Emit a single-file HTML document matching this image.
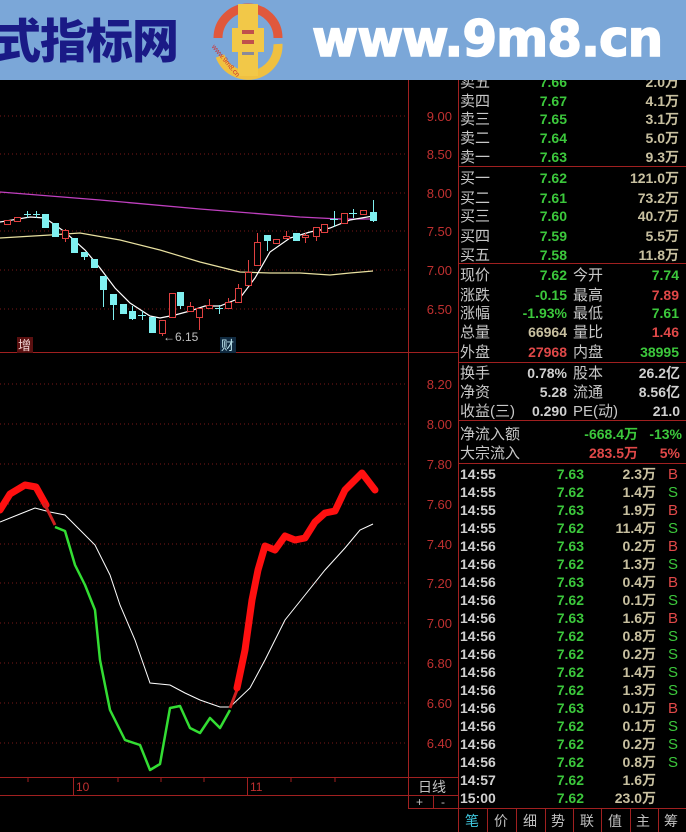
<!DOCTYPE html>
<html><head><meta charset="utf-8"><style>
html,body{margin:0;padding:0;background:#000;width:686px;height:832px;overflow:hidden}
#banner{position:absolute;left:0;top:0;width:686px;height:80px;background:#7ba7d8}
svg text{font-family:"Liberation Sans","Noto Sans CJK SC",sans-serif}
</style></head><body>
<div id="banner">
<div style="position:absolute;left:-6px;top:10px;font:900 47px 'Noto Sans CJK SC','WenQuanYi Zen Hei',sans-serif;color:#1a1a86;letter-spacing:-1px;line-height:56px">式指标网</div>
<svg style="position:absolute;left:200px;top:0" width="95" height="82">
<path d="M18 38 A30 30 0 0 1 78 38" fill="none" stroke="#e0583c" stroke-width="9"/>
<path d="M78 44 A30 30 0 0 1 20 56" fill="none" stroke="#f0c040" stroke-width="9"/>
<rect x="38" y="4" width="20" height="72" fill="#f2c848"/>
<rect x="32" y="28" width="32" height="24" fill="#f2c848"/>
<rect x="42" y="30" width="12" height="4" fill="#c0504c"/><rect x="42" y="40" width="12" height="4" fill="#c0504c"/><rect x="42" y="52" width="12" height="3" fill="#8a8a9a"/>
<text x="10" y="50" font-size="7" fill="#c33" transform="rotate(50 14 50)">www.9m8.cn</text>
</svg>
<div style="position:absolute;left:312px;top:6px;font:bold 50px 'DejaVu Sans','Liberation Sans',sans-serif;color:#fff;letter-spacing:-1px;line-height:66px;-webkit-text-stroke:1.5px #fff">www.9m8.cn</div>
</div>
<svg style="position:absolute;left:0;top:80px" width="686" height="752" viewBox="0 80 686 752">
<g stroke="#7a1818" stroke-dasharray="1 3" stroke-width="1">
<line x1="0" y1="116" x2="408" y2="116"/><line x1="0" y1="154" x2="408" y2="154"/><line x1="0" y1="193" x2="408" y2="193"/><line x1="0" y1="231" x2="408" y2="231"/><line x1="0" y1="270" x2="408" y2="270"/><line x1="0" y1="309" x2="408" y2="309"/>
<line x1="0" y1="384" x2="408" y2="384"/><line x1="0" y1="424" x2="408" y2="424"/><line x1="0" y1="464" x2="408" y2="464"/><line x1="0" y1="504" x2="408" y2="504"/><line x1="0" y1="544" x2="408" y2="544"/><line x1="0" y1="583" x2="408" y2="583"/><line x1="0" y1="623" x2="408" y2="623"/><line x1="0" y1="663" x2="408" y2="663"/><line x1="0" y1="703" x2="408" y2="703"/><line x1="0" y1="743" x2="408" y2="743"/>
</g>
<g stroke="#a02020" stroke-width="1" fill="none">
<line x1="408.5" y1="80" x2="408.5" y2="808"/><line x1="458.5" y1="80" x2="458.5" y2="832"/>
<line x1="0" y1="352.5" x2="458" y2="352.5"/><line x1="0" y1="777.5" x2="458" y2="777.5"/><line x1="0" y1="795.5" x2="458" y2="795.5"/>
<line x1="408" y1="808.5" x2="686" y2="808.5"/><line x1="433.5" y1="795" x2="433.5" y2="808"/>
<line x1="458" y1="166.5" x2="686" y2="166.5"/><line x1="458" y1="263.5" x2="686" y2="263.5"/><line x1="458" y1="362.5" x2="686" y2="362.5"/><line x1="458" y1="420.5" x2="686" y2="420.5"/><line x1="458" y1="463.5" x2="686" y2="463.5"/>
<line x1="73.5" y1="778" x2="73.5" y2="795"/><line x1="247.5" y1="778" x2="247.5" y2="795"/>
<line x1="28" y1="778" x2="28" y2="782"/><line x1="118" y1="778" x2="118" y2="782"/><line x1="161" y1="778" x2="161" y2="782"/><line x1="204" y1="778" x2="204" y2="782"/><line x1="291" y1="778" x2="291" y2="782"/><line x1="335" y1="778" x2="335" y2="782"/>
<line x1="487.5" y1="808" x2="487.5" y2="832"/><line x1="516.5" y1="808" x2="516.5" y2="832"/><line x1="545.5" y1="808" x2="545.5" y2="832"/><line x1="573.5" y1="808" x2="573.5" y2="832"/><line x1="601.5" y1="808" x2="601.5" y2="832"/><line x1="630.5" y1="808" x2="630.5" y2="832"/><line x1="658.5" y1="808" x2="658.5" y2="832"/>
</g>
<g fill="#c03030" font-size="13" text-anchor="end">
<text x="452" y="121">9.00</text><text x="452" y="159">8.50</text><text x="452" y="198">8.00</text><text x="452" y="236">7.50</text><text x="452" y="275">7.00</text><text x="452" y="314">6.50</text>
<text x="452" y="389">8.20</text><text x="452" y="429">8.00</text><text x="452" y="469">7.80</text><text x="452" y="509">7.60</text><text x="452" y="549">7.40</text><text x="452" y="588">7.20</text><text x="452" y="628">7.00</text><text x="452" y="668">6.80</text><text x="452" y="708">6.60</text><text x="452" y="748">6.40</text>
</g>
<polyline fill="none" stroke="#c040c0" stroke-width="1.3" points="0,192 100,200 200,209 300,217 340,219 373,219"/>
<polyline fill="none" stroke="#e8e0a0" stroke-width="1.2" points="0,238 50,235 80,233 120,240 160,250 200,262 240,272 270,273 300,273 330,275 350,273 373,271"/>
<polyline fill="none" stroke="#fff" stroke-width="1.2" points="0,222 30,217 45,218 65,232 85,250 100,268 115,288 130,303 150,316 160,318 175,315 190,311 205,306 220,306 240,298 255,278 270,252 290,238 310,232 330,228 350,220 373,216"/>
<g stroke-width="1">
<g stroke="#e04040" fill="#000">
<rect x="4.5" y="220.5" width="6" height="4"/><rect x="14.5" y="217.5" width="6" height="4"/>
<line x1="65.5" y1="229" x2="65.5" y2="242"/><rect x="62.5" y="230.5" width="6" height="8"/>
<rect x="159.5" y="320.5" width="6" height="13"/><line x1="162.5" y1="333" x2="162.5" y2="336"/>
<rect x="169.5" y="293.5" width="6" height="24"/>
<line x1="190.5" y1="302" x2="190.5" y2="311"/><rect x="187.5" y="306.5" width="6" height="5"/>
<line x1="199.5" y1="308" x2="199.5" y2="330"/><rect x="196.5" y="308.5" width="6" height="9"/>
<line x1="209.5" y1="299" x2="209.5" y2="308"/><rect x="206.5" y="305.5" width="6" height="3"/>
<line x1="228.5" y1="298" x2="228.5" y2="308"/><rect x="225.5" y="302.5" width="6" height="6"/>
<line x1="238.5" y1="284" x2="238.5" y2="302"/><rect x="235.5" y="288.5" width="6" height="14"/>
<line x1="248.5" y1="260" x2="248.5" y2="285"/><rect x="245.5" y="272.5" width="6" height="13"/>
<line x1="257.5" y1="233" x2="257.5" y2="265"/><rect x="254.5" y="242.5" width="6" height="23"/>
<rect x="273.5" y="239.5" width="6" height="4"/>
<line x1="286.5" y1="231" x2="286.5" y2="238"/><rect x="283.5" y="236.5" width="6" height="2"/>
<line x1="305.5" y1="233" x2="305.5" y2="243"/><rect x="302.5" y="235.5" width="6" height="2"/>
<line x1="316.5" y1="227" x2="316.5" y2="241"/><rect x="313.5" y="227.5" width="6" height="9"/>
<rect x="321.5" y="224.5" width="6" height="8"/>
<rect x="341.5" y="213.5" width="6" height="10"/>
<rect x="360.5" y="210.5" width="6" height="4"/>
</g>
<g stroke="#7ff0f0" fill="#7ff0f0">
<line x1="24" y1="214.5" x2="31" y2="214.5"/><line x1="27.5" y1="211" x2="27.5" y2="218"/>
<line x1="33" y1="214.5" x2="40" y2="214.5"/><line x1="36.5" y1="211" x2="36.5" y2="218"/>
<rect x="42.5" y="214.5" width="6" height="13"/>
<rect x="52.5" y="223.5" width="6" height="13"/>
<rect x="71.5" y="238.5" width="6" height="14"/>
<line x1="84.5" y1="252" x2="84.5" y2="260"/><rect x="81.5" y="252.5" width="6" height="4"/>
<rect x="91.5" y="259.5" width="6" height="8"/>
<line x1="103.5" y1="276" x2="103.5" y2="307"/><rect x="100.5" y="276.5" width="6" height="13"/>
<line x1="113.5" y1="294" x2="113.5" y2="320"/><rect x="110.5" y="294.5" width="6" height="10"/>
<rect x="120.5" y="304.5" width="6" height="9"/>
<line x1="132.5" y1="306" x2="132.5" y2="320"/><rect x="129.5" y="311.5" width="6" height="7"/>
<line x1="138" y1="315.5" x2="146" y2="315.5"/><line x1="142.5" y1="311" x2="142.5" y2="320"/>
<rect x="149.5" y="317.5" width="6" height="15"/>
<line x1="180.5" y1="292" x2="180.5" y2="309"/><rect x="177.5" y="292.5" width="6" height="13"/>
<line x1="215" y1="308.5" x2="223" y2="308.5"/><line x1="219.5" y1="305" x2="219.5" y2="314"/>
<line x1="267.5" y1="235" x2="267.5" y2="251"/><rect x="264.5" y="235.5" width="6" height="5"/>
<rect x="293.5" y="233.5" width="6" height="7"/>
<line x1="330" y1="219.5" x2="338" y2="219.5"/><line x1="334.5" y1="211" x2="334.5" y2="227"/>
<line x1="349" y1="213.5" x2="357" y2="213.5"/><line x1="353.5" y1="209" x2="353.5" y2="218"/>
<line x1="373.5" y1="200" x2="373.5" y2="222"/><rect x="370.5" y="212.5" width="6" height="8"/>
</g>
</g>
<text x="163" y="341" fill="#c0c0c0" font-size="12">←6.15</text>
<rect x="17" y="337" width="16" height="16" fill="#5a1010"/><text x="18" y="350" fill="#f0d0d0" font-size="13">增</text>
<rect x="220" y="337" width="16" height="16" fill="#102a40"/><text x="221" y="350" fill="#c0e8f0" font-size="13">财</text>
<polyline fill="none" stroke="#fff" stroke-width="1" points="0,522 20,514 35,508 50,512 65,515 95,545 110,575 120,605 135,640 150,683 170,685 185,693 200,700 220,707 230,707 250,688 265,660 285,620 305,595 325,570 345,548 360,530 373,524"/>
<polyline fill="none" stroke="#33dd33" stroke-width="2.5" stroke-linejoin="round" points="55,527 65,531 75,565 85,585 95,610 100,660 110,710 125,740 140,745 150,770 160,764 170,708 180,706 190,728 200,733 210,718 220,728 230,710"/>
<polyline fill="none" stroke="#ff1010" stroke-width="7" stroke-linejoin="round" stroke-linecap="round" points="0,510 10,494 25,485 36,487 46,505"/>
<polyline fill="none" stroke="#d02020" stroke-width="3" points="44,503 55,525"/>
<polyline fill="none" stroke="#d02020" stroke-width="3" points="230,708 237,690"/>
<polyline fill="none" stroke="#ff1010" stroke-width="7" stroke-linejoin="round" stroke-linecap="round" points="237,688 245,650 252,600 258,570 265,546 275,550 285,536 295,540 305,538 315,522 325,513 335,511 345,490 362,473 375,490"/>
<g fill="#c03030" font-size="12"><text x="76" y="791">10</text><text x="250" y="791">11</text></g>
<g fill="#c0c0c0" font-size="14"><text x="418" y="792" font-family="Noto Sans CJK SC">日线</text><text x="416" y="806" font-size="12">+</text><text x="441" y="806" font-size="12">-</text></g>
<g font-size="15" fill="#c8c8c8" font-family="Noto Sans CJK SC,sans-serif">
<text x="460" y="87">卖五</text><text x="460" y="106">卖四</text><text x="460" y="124">卖三</text><text x="460" y="143">卖二</text><text x="460" y="162">卖一</text>
<text x="460" y="183">买一</text><text x="460" y="203">买二</text><text x="460" y="221">买三</text><text x="460" y="241">买四</text><text x="460" y="260">买五</text>
<text x="460" y="280">现价</text><text x="460" y="300">涨跌</text><text x="460" y="318">涨幅</text><text x="460" y="337">总量</text><text x="460" y="357">外盘</text>
<text x="573" y="280">今开</text><text x="573" y="300">最高</text><text x="573" y="318">最低</text><text x="573" y="337">量比</text><text x="573" y="357">内盘</text>
<text x="460" y="378">换手</text><text x="460" y="397">净资</text><text x="460" y="416">收益(三)</text>
<text x="573" y="378">股本</text><text x="573" y="397">流通</text><text x="573" y="416">PE(动)</text>
<text x="460" y="439">净流入额</text><text x="460" y="458">大宗流入</text>
</g>
<g font-size="14" font-weight="bold" text-anchor="end" fill="#3cc83c">
<text x="567" y="87">7.66</text><text x="567" y="106">7.67</text><text x="567" y="124">7.65</text><text x="567" y="143">7.64</text><text x="567" y="162">7.63</text>
<text x="567" y="183">7.62</text><text x="567" y="203">7.61</text><text x="567" y="221">7.60</text><text x="567" y="241">7.59</text><text x="567" y="260">7.58</text>
<text x="567" y="280">7.62</text><text x="567" y="300">-0.15</text><text x="567" y="318">-1.93%</text>
<text x="679" y="280">7.74</text><text x="679" y="318">7.61</text><text x="679" y="357">38995</text>
<text x="638" y="439">-668.4万</text><text x="682" y="439">-13%</text>
<text x="679" y="300" fill="#e04848">7.89</text><text x="679" y="337" fill="#e04848">1.46</text>
<text x="567" y="357" fill="#e04848">27968</text><text x="567" y="337" fill="#c8c0a0">66964</text>
<text x="638" y="458" fill="#e04848">283.5万</text><text x="680" y="458" fill="#e04848">5%</text>
</g>
<g font-size="14" font-weight="bold" text-anchor="end" fill="#d0d0d0">
<text x="567" y="378">0.78%</text><text x="567" y="397">5.28</text><text x="567" y="416">0.290</text>
<text x="680" y="378">26.2亿</text><text x="680" y="397">8.56亿</text><text x="680" y="416">21.0</text>
</g>
<g font-size="14" font-weight="bold" text-anchor="end" fill="#c8c0a0">
<text x="679" y="87">2.0万</text><text x="679" y="106">4.1万</text><text x="679" y="124">3.1万</text><text x="679" y="143">5.0万</text><text x="679" y="162">9.3万</text>
<text x="679" y="183">121.0万</text><text x="679" y="203">73.2万</text><text x="679" y="221">40.7万</text><text x="679" y="241">5.5万</text><text x="679" y="260">11.8万</text>
</g>
<g font-size="14" font-weight="bold">
<g fill="#d0d0d0">
<text x="460" y="479">14:55</text><text x="460" y="497">14:55</text><text x="460" y="515">14:55</text><text x="460" y="533">14:55</text>
<text x="460" y="551">14:56</text><text x="460" y="569">14:56</text><text x="460" y="587">14:56</text><text x="460" y="605">14:56</text><text x="460" y="623">14:56</text><text x="460" y="641">14:56</text><text x="460" y="659">14:56</text><text x="460" y="677">14:56</text><text x="460" y="695">14:56</text><text x="460" y="713">14:56</text><text x="460" y="731">14:56</text><text x="460" y="749">14:56</text><text x="460" y="767">14:56</text><text x="460" y="785">14:57</text><text x="460" y="803">15:00</text>
</g>
<g fill="#3cc83c" text-anchor="end">
<text x="584" y="479">7.63</text><text x="584" y="497">7.62</text><text x="584" y="515">7.63</text><text x="584" y="533">7.62</text><text x="584" y="551">7.63</text><text x="584" y="569">7.62</text><text x="584" y="587">7.63</text><text x="584" y="605">7.62</text><text x="584" y="623">7.63</text><text x="584" y="641">7.62</text><text x="584" y="659">7.62</text><text x="584" y="677">7.62</text><text x="584" y="695">7.62</text><text x="584" y="713">7.63</text><text x="584" y="731">7.62</text><text x="584" y="749">7.62</text><text x="584" y="767">7.62</text><text x="584" y="785">7.62</text><text x="584" y="803">7.62</text>
</g>
<g fill="#c8c0a0" text-anchor="end">
<text x="656" y="479">2.3万</text><text x="656" y="497">1.4万</text><text x="656" y="515">1.9万</text><text x="656" y="533">11.4万</text><text x="656" y="551">0.2万</text><text x="656" y="569">1.3万</text><text x="656" y="587">0.4万</text><text x="656" y="605">0.1万</text><text x="656" y="623">1.6万</text><text x="656" y="641">0.8万</text><text x="656" y="659">0.2万</text><text x="656" y="677">1.4万</text><text x="656" y="695">1.3万</text><text x="656" y="713">0.1万</text><text x="656" y="731">0.1万</text><text x="656" y="749">0.2万</text><text x="656" y="767">0.8万</text><text x="656" y="785">1.6万</text><text x="656" y="803">23.0万</text>
</g>
<g font-weight="normal" font-size="15">
<text x="668" y="479" fill="#e04848">B</text><text x="668" y="497" fill="#3cc83c">S</text><text x="668" y="515" fill="#e04848">B</text><text x="668" y="533" fill="#3cc83c">S</text><text x="668" y="551" fill="#e04848">B</text><text x="668" y="569" fill="#3cc83c">S</text><text x="668" y="587" fill="#e04848">B</text><text x="668" y="605" fill="#3cc83c">S</text><text x="668" y="623" fill="#e04848">B</text><text x="668" y="641" fill="#3cc83c">S</text><text x="668" y="659" fill="#3cc83c">S</text><text x="668" y="677" fill="#3cc83c">S</text><text x="668" y="695" fill="#3cc83c">S</text><text x="668" y="713" fill="#e04848">B</text><text x="668" y="731" fill="#3cc83c">S</text><text x="668" y="749" fill="#3cc83c">S</text><text x="668" y="767" fill="#3cc83c">S</text>
</g>
</g>
<g font-size="14" fill="#c0c0c0" font-family="Noto Sans CJK SC,sans-serif">
<text x="465" y="826" fill="#40c8e0">笔</text><text x="494" y="826">价</text><text x="523" y="826">细</text><text x="551" y="826">势</text><text x="580" y="826">联</text><text x="608" y="826">值</text><text x="636" y="826">主</text><text x="664" y="826">筹</text>
</g>
</svg>
</body></html>
